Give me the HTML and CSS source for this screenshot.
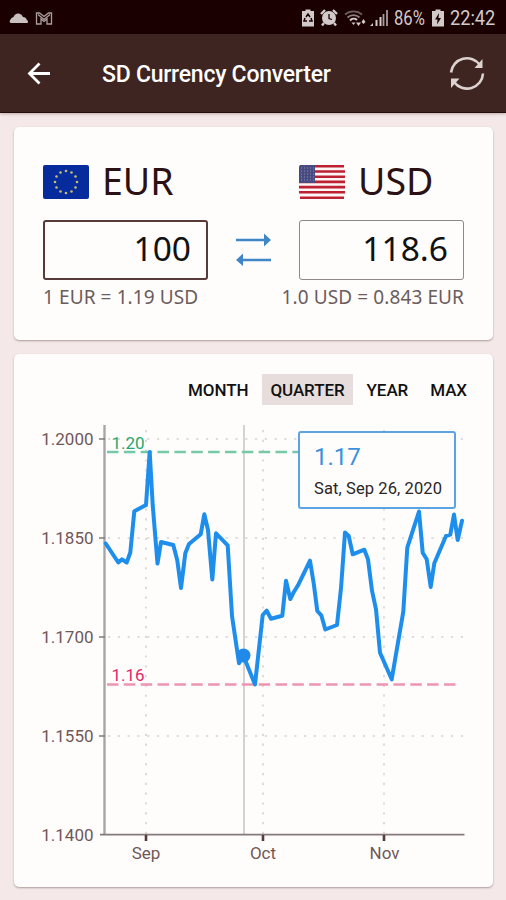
FILE: index.html
```
<!DOCTYPE html>
<html lang="en">
<head>
    <meta charset="UTF-8">
    <meta name="viewport" content="width=device-width, initial-scale=1.0">
    <title>SD Currency Converter</title>
    <link rel="stylesheet" href="styles.css">
</head>
<body>
    <div class="status-bar">
        <svg class="status-left" width="46" height="16" viewBox="0 0 46 16">
            <path d="M2 13Q-.5 12 1.500 9.500Q2 7.500 4.500 7Q6 3 10 3.500Q13 4 14 7Q17.500 7.500 17.500 9.500Q20 11.500 18.500 13z" fill="#c9c0c0"/>
            <path d="M27.500 3h3l4.500 3.500L39.500 3h3v11h-4.500v-5l-3 2.500-3-2.500v5h-4.500zM29 4.500l6 5 6-5" fill="none" stroke="#a99d9d" stroke-width="1.300"/>
        </svg>
        <div class="status-right">
            <!-- battery saver -->
            <svg width="12" height="18" viewBox="0 0 12 18">
                <path d="M3.500 2V.5h5V2H12v15.500H0V2z" fill="#d2caca"/>
                <path d="M4 8l2-3 2 3M9 9l1 3H7M5 12H2l1-3" fill="none" stroke="#1b0000" stroke-width="1.500"/>
            </svg>
            <!-- alarm -->
            <svg width="18" height="18" viewBox="0 0 18 18">
                <path d="M1 5L5 1M17 5L13 1M4 14l-2 2.500M14 14l2 2.500" stroke="#d2caca" stroke-width="2.400"/>
                <circle cx="9" cy="9" r="7" fill="#d2caca"/>
                <path d="M9 5v4.500l3 1" fill="none" stroke="#1b0000" stroke-width="1.300"/>
            </svg>
            <!-- wifi -->
            <svg class="wifi" width="22" height="18" viewBox="0 0 22 18">
                <path d="M1 5.500a13 13 0 0 1 17 0" fill="none" stroke="#6f5d5d" stroke-width="1.800"/>
                <path d="M3.500 8.500a9 9 0 0 1 12 0" fill="none" stroke="#8e7f7f" stroke-width="1.800"/>
                <path d="M6 11.500a5 5 0 0 1 7-.5" fill="none" stroke="#d2caca" stroke-width="2"/>
                <path d="M7.500 13.500h4l-2 2.500z" fill="#d2caca"/>
                <path d="M12 13.500h5l-2.500 3.500zM17.500 13l2-3 2 3-2 2z" fill="#d2caca"/>
            </svg>
            <!-- signal -->
            <svg width="18" height="18" viewBox="0 0 18 18">
                <path d="M0 17l3-3v3z" fill="#d2caca"/>
                <path d="M6.500 17v-6M10.500 17V8" stroke="#d2caca" stroke-width="2"/>
                <path d="M13.500 17V5M17 17V1" stroke="#a69a9a" stroke-width="1.800"/>
            </svg>
            <span class="percent">86%</span>
            <!-- charging battery -->
            <svg width="12" height="18" viewBox="0 0 12 18">
                <path d="M3.500 2V.5h5V2H12v15.500H0V2z" fill="#d2caca"/>
                <path d="M7 4L3 10.500h2.500L5 15.500l4-6.500H6.500z" fill="#1b0000"/>
            </svg>
            <span class="clock">22:42</span>
        </div>
    </div>

    <div class="app-bar">
        <svg width="24" height="24" viewBox="0 0 24 24">
            <path d="M23 12.500H3M12.500 2.500L2.500 12.500l10 10" fill="none" stroke="#fff" stroke-width="2.800"/>
        </svg>
        <h1>SD Currency Converter</h1>
        <svg width="36" height="36" viewBox="0 0 36 36">
            <g fill="none" stroke="#dcd2cf" stroke-width="2.600">
                <path d="M2 17.500A16 15.800 0 0 1 31 10"/>
                <path d="M34 18.500A16 15.800 0 0 1 5 27"/>
            </g>
            <path d="M33.500 4v9H25.500zM2 33v-9.500H10.500z" fill="#dcd2cf"/>
        </svg>
    </div>

    <div class="card converter">
        <div class="side">
            <div class="currency">
                <svg width="46" height="34" viewBox="0 0 46 34">
                    <rect width="46" height="34" rx="2" fill="#052b9c"/>
                    <g fill="#c9bd70">
                        <circle cx="23" cy="6" r="1.300"/>
                        <circle cx="28.500" cy="7.500" r="1.300"/>
                        <circle cx="32.500" cy="11.500" r="1.300"/>
                        <circle cx="34" cy="17" r="1.300"/>
                        <circle cx="32.500" cy="22.500" r="1.300"/>
                        <circle cx="28.500" cy="26.500" r="1.300"/>
                        <circle cx="23" cy="28" r="1.300"/>
                        <circle cx="17.500" cy="26.500" r="1.300"/>
                        <circle cx="13.500" cy="22.500" r="1.300"/>
                        <circle cx="12" cy="17" r="1.300"/>
                        <circle cx="13.500" cy="11.500" r="1.300"/>
                        <circle cx="17.500" cy="7.500" r="1.300"/>
                    </g>
                </svg>
                <span>EUR</span>
            </div>
            <div class="amount active">100</div>
            <div class="rate">1 EUR = 1.19 USD</div>
        </div>
        <svg class="swap" width="37" height="34" viewBox="0 0 37 34">
            <path d="M1 8h30M6 28h30" stroke="#4086c6" stroke-width="2.400"/>
            <path d="M29 1.500L36 8l-7 6.500zM8 21.500L1 28l7 6z" fill="#4086c6"/>
        </svg>
        <div class="side">
            <div class="currency">
                <svg width="46" height="34" viewBox="0 0 46 34">
                    <rect width="46" height="34" rx="2" fill="#fdf6f6"/>
                    <path d="M1 1.300h44M0 6.500h46M0 11.700h46M0 16.900h46M0 22.100h46M0 27.300h46M1 32.700h44" stroke="#bd2030" stroke-width="2.600"/>
                    <path d="M0 2a2 2 0 0 1 2-2h14v18H0z" fill="#484b82"/>
                    <path d="M2 3h13M2 6h13M2 9h13M2 12h13M2 15h13" stroke="#8c8db0" stroke-width="1" stroke-dasharray="1 2"/>
                </svg>
                <span>USD</span>
            </div>
            <div class="amount">118.6</div>
            <div class="rate right">1.0 USD = 0.843 EUR</div>
        </div>
    </div>

    <div class="card history">
        <div class="tabs">
            <span>MONTH</span>
            <span class="selected">QUARTER</span>
            <span>YEAR</span>
            <span>MAX</span>
        </div>
        <div class="chart">
            <svg width="479" height="467" viewBox="14 420 479 467">
                <g class="grid">
                    <path d="M108 439H465M108 538H465M108 637H465M108 736H465"/>
                    <path d="M146 430V834M263 430V834M384 430V834"/>
                </g>
                <path class="cursor" d="M244 425V834"/>
                <path class="axis-y" d="M104.500 425V835"/>
                <path class="axis-x" d="M100 834.700H464.500"/>
                <path class="tick-y" d="M99 439h6M99 538h6M99 637h6M99 736h6"/>
                <path class="tick-x" d="M146 835v6M263 835v6M384 835v6"/>

                <path class="limit high" d="M107 452H456"/>
                <path class="limit low" d="M107 684.500H456"/>

                <polyline class="rate-line" points="105.700,543.500 118.300,562.500 122,559.300 126.700,562.500 130.300,552.500 134.300,511.300 146,505 149.700,452 152.700,505 157.500,563.500 161,542 173.300,545 177.300,560.500 181,588 185.300,553.300 189,544 200.700,534.300 204.300,514.300 208,530 212.300,579.500 216,533.300 227.700,545.300 232,616 239,663.300 243.300,655.500 255,684.500 262.700,615 266.700,610.700 271,618.700 282.300,615.700 286,580.700 290.300,599 294,591.700 298,585.300 310,560.700 313.700,583.300 317.300,611 321.300,615.300 325.300,629.500 337,625 341,588.300 345,532.500 348.700,536 352.700,554.300 364.300,549.700 368,559.300 372,590.700 376,609.300 380,652.700 391.700,679.300 403.300,611.700 407.300,547.700 419,511.500 422.700,552.700 426.700,559.300 430.700,587 434.300,563.300 446,536 450.300,534.700 454,514.500 457.700,540 462,520.700"/>
                <circle cx="243.500" cy="655.500" r="7" fill="#2189e8"/>

                <g class="label y-label">
                    <text x="93.500" y="445">1.2000</text>
                    <text x="93.500" y="544">1.1850</text>
                    <text x="93.500" y="643">1.1700</text>
                    <text x="93.500" y="742">1.1550</text>
                    <text x="93.500" y="841">1.1400</text>
                </g>
                <g class="label x-label">
                    <text x="146" y="859">Sep</text>
                    <text x="263" y="859">Oct</text>
                    <text x="384.500" y="859">Nov</text>
                </g>
                <text class="limit-label high-label" x="111.500" y="448.500">1.20</text>
                <text class="limit-label low-label" x="111.500" y="681">1.16</text>
            </svg>
            <div class="tooltip">
                <div class="value">1.17</div>
                <div class="date">Sat, Sep 26, 2020</div>
            </div>
        </div>
    </div>
</body>
</html>
```

FILE: styles.css
```
* {
    box-sizing: border-box;
}
body {
    margin: 0;
    height: 900px;
    overflow: hidden;
    background: #f4e9e8;
    font-family: Roboto, sans-serif;
}
svg {
    display: block;
    flex-shrink: 0;
}
.status-bar {
    display: flex;
    justify-content: space-between;
    align-items: center;
    height: 34px;
    padding: 2px 10px 0 9px;
    background: #1b0000;
    color: #d2caca;
    font-size: 20px;
}
.status-right {
    display: flex;
    align-items: center;
    gap: 6px;
}
.wifi {
    margin-right: -2px;
}
.percent,
.clock {
    transform: scaleX(0.87);
    transform-origin: left;
}
.percent {
    width: 32px;
    transform: scaleX(0.83);
}
.clock {
    width: 46px;
    transform: scaleX(0.91);
}
.app-bar {
    display: flex;
    align-items: center;
    height: 79px;
    padding: 0 21px 0 27px;
    background: #3e2522;
    border-bottom: 1px solid #260d0c;
    box-shadow: 0 1px 3px rgba(60, 30, 30, 0.3);
}
.app-bar h1 {
    flex: 1;
    margin: 2px 0 0 51px;
    color: #fff;
    font-size: 23px;
    font-weight: 500;
    letter-spacing: -0.25px;
}
.card {
    width: 479px;
    margin: 14px 0 0 14px;
    background: #fefdfc;
    border-radius: 5px;
    box-shadow: 0 1px 2px rgba(70, 40, 40, 0.4);
}
.converter {
    display: flex;
    justify-content: space-between;
    height: 213px;
    padding: 33px 29px 0;
    font-family: "Noto Sans", sans-serif;
}
.side {
    width: 165px;
}
.currency {
    display: flex;
    align-items: center;
    gap: 13px;
    height: 44px;
    color: #2b1114;
    font-size: 37.5px;
}
.currency span {
    margin-top: -4px;
}
.amount {
    height: 60px;
    margin-top: 16px;
    padding-right: 15px;
    border: 1px solid #8f8788;
    border-radius: 3px;
    color: #111;
    font-size: 33.5px;
    line-height: 55px;
    text-align: right;
}
.amount.active {
    border: 2px solid #573a39;
    line-height: 53px;
}
.rate {
    margin-top: 4px;
    color: #6b5c5c;
    font-size: 19px;
    letter-spacing: 0.1px;
    line-height: 26px;
    white-space: nowrap;
}
.rate.right {
    display: flex;
    justify-content: flex-end;
}
.swap {
    margin-top: 72px;
}
.history {
    height: 533px;
}
.tabs {
    display: flex;
    justify-content: flex-end;
    gap: 6px;
    height: 66px;
    padding: 20px 18px 0 0;
}
.tabs span {
    height: 31px;
    padding: 0 8px;
    color: #111;
    font-size: 17px;
    font-weight: 500;
    letter-spacing: -0.08px;
    line-height: 33px;
}
.tabs .selected {
    background: #e8dddd;
}
.chart {
    position: relative;
}
.grid path {
    stroke: #d4d1d1;
    stroke-width: 1.6;
    stroke-dasharray: 2.2 7.6;
}
.cursor {
    stroke: #c6c4c4;
    stroke-width: 1.5;
}
.axis-y {
    stroke: #aaa5a5;
    stroke-width: 2.4;
}
.axis-x {
    stroke: #857a7a;
    stroke-width: 1.8;
}
.tick-y {
    stroke: #857a7a;
    stroke-width: 1.5;
}
.tick-x {
    stroke: #573a39;
    stroke-width: 2.6;
}
.limit {
    stroke-width: 2.4;
    stroke-dasharray: 11.5 5.35;
}
.high {
    stroke: #76c9a4;
}
.low {
    stroke: #ee94b3;
}
.rate-line {
    fill: none;
    stroke: #1e8eec;
    stroke-width: 4;
    stroke-linejoin: round;
    stroke-linecap: round;
}
.label {
    fill: #715758;
    font-size: 17px;
}
.y-label {
    text-anchor: end;
}
.x-label {
    text-anchor: middle;
}
.limit-label {
    font-size: 17px;
}
.high-label {
    fill: #25a873;
}
.low-label {
    fill: #df2869;
}
.tooltip {
    position: absolute;
    left: 284px;
    top: 11px;
    width: 158px;
    height: 78px;
    padding: 9px 14px;
    background: #fefdfc;
    border: 2px solid #5ba3e3;
    border-radius: 3px;
}
.tooltip .value {
    color: #3b91df;
    font-size: 24px;
    line-height: 30px;
}
.tooltip .date {
    margin-top: 5px;
    color: #2c2526;
    font-size: 16.5px;
    letter-spacing: 0.1px;
    line-height: 24px;
    white-space: nowrap;
}
```
